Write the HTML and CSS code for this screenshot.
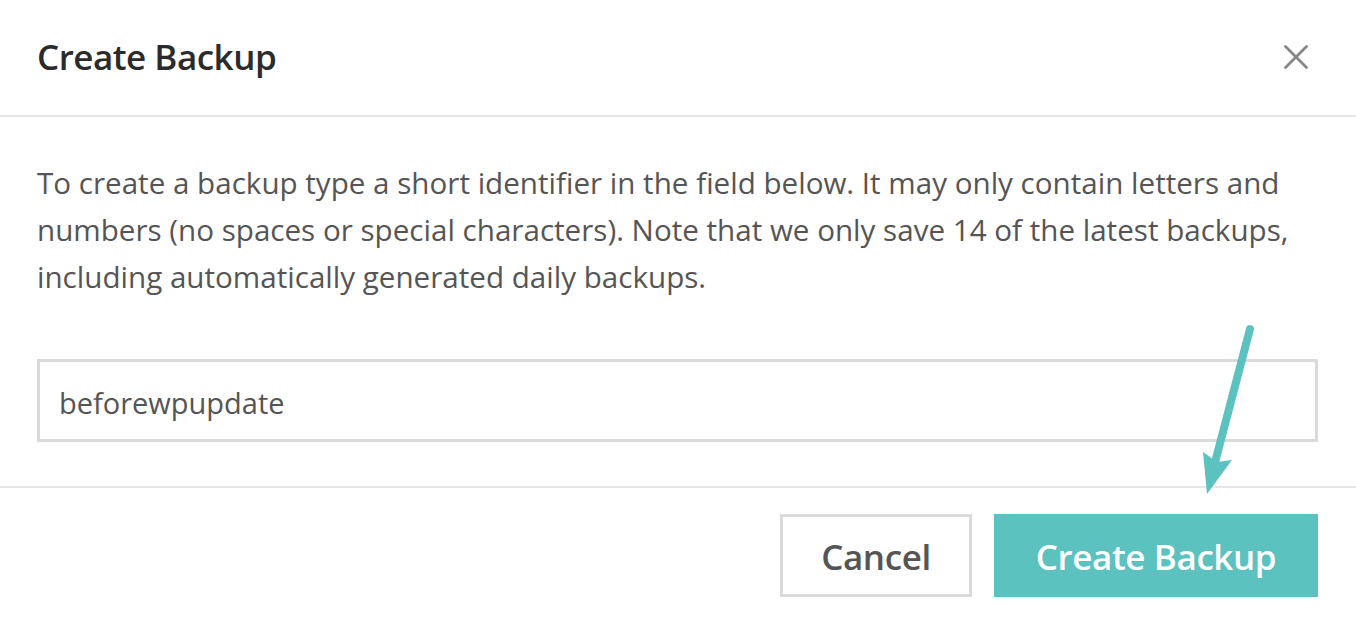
FILE: index.html
```html
<!DOCTYPE html>
<html lang="en">
<head>
<meta charset="utf-8">
<title>Create Backup</title>
<link rel="stylesheet" href="styles.css">
</head>
<body>
<div class="modal">
  <header class="modal-header">
    <h1 class="modal-title">Create Backup</h1>
    <button class="close-btn" aria-label="Close">
      <svg width="24" height="24" viewBox="0 0 24 24"><path d="M1.5 1.5 L22.5 22.5 M22.5 1.5 L1.5 22.5" stroke="#868686" stroke-width="2.8" stroke-linecap="round" fill="none"/></svg>
    </button>
  </header>
  <section class="modal-body">
    <p class="desc">To create a backup type a short identifier in the field below. It may only contain letters and numbers (no spaces or special characters). Note that we only save 14 of the latest backups, including automatically generated daily backups.</p>
    <input class="backup-input" type="text" value="beforewpupdate">
  </section>
  <footer class="modal-footer">
    <button class="btn btn-cancel">Cancel</button>
    <button class="btn btn-primary">Create Backup</button>
  </footer>
  <svg class="arrow" width="1356" height="618" viewBox="0 0 1356 618">
    <path d="M1250 329 L1213 470" stroke="#5bc2c0" stroke-width="8" stroke-linecap="round" fill="none"/>
    <path d="M1203 452 L1207 494 L1232 460 L1217 462 Z" fill="#5bc2c0"/>
  </svg>
</div>
</body>
</html>
```

FILE: styles.css
```css
* { box-sizing: border-box; }
html, body { margin: 0; padding: 0; background: #fff; }
body { font-family: "Open Sans", "Noto Sans", sans-serif; color: #555; }

.modal { position: relative; width: 1356px; height: 618px; overflow: hidden; }

.modal-header {
  height: 117px;
  border-bottom: 2px solid #e6e6e6;
  display: flex;
  align-items: center;
  justify-content: space-between;
  padding: 0 38px 2px 37px;
}
.modal-title {
  margin: 0;
  font-size: 35px;
  font-weight: 600;
  color: #2b2b2b;
  letter-spacing: -0.5px;
}
.close-btn {
  border: 0; background: none; padding: 0; margin-right: 10px;
  width: 24px; height: 24px; display: flex;
}

.modal-body { padding: 42px 38px 44px 37px; border-bottom: 2px solid #e6e6e6; }
.desc {
  margin: 0 0 59px;
  font-size: 29.6px;
  line-height: 47px;
  color: #555;
}
.backup-input {
  display: block;
  width: 100%;
  height: 83px;
  border: 3px solid #dadada;
  padding: 4px 19px 0;
  font-family: inherit;
  font-size: 29px;
  color: #555;
  outline: none;
}

.modal-footer {
  display: flex;
  justify-content: flex-end;
  gap: 22px;
  padding: 26px 38px 0 37px;
}
.btn {
  height: 83px;
  font-family: inherit;
  font-size: 35px;
  font-weight: 600;
  letter-spacing: -0.4px;
  padding: 2px 0 0;
  cursor: pointer;
}
.btn-cancel { width: 192px; background: #fff; border: 3px solid #dadada; color: #555; }
.btn-primary { width: 324px; background: #5bc2c0; border: 0; color: #fff; }

.arrow { position: absolute; left: 0; top: 0; pointer-events: none; }
```
